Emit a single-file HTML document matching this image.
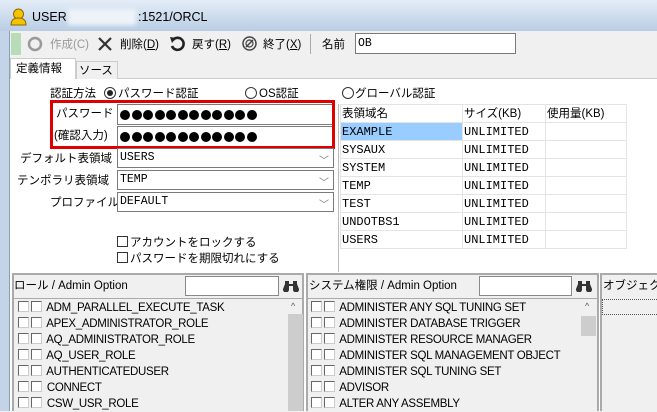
<!DOCTYPE html>
<html><head><meta charset="utf-8"><style>
*{box-sizing:border-box;margin:0;padding:0}
body{width:657px;height:411px;overflow:hidden;position:relative;background:#f0f0f0;font-family:"Liberation Sans","Noto Sans CJK JP",sans-serif;font-size:12px;color:#000}
.a{position:absolute;white-space:nowrap}
.j{font-size:11.5px;line-height:14px}
.mono{font-family:"Liberation Mono","Noto Sans CJK JP",monospace;font-size:11.5px}
.inp{position:absolute;background:#fff;border:1px solid #7a7a7a}
.cb{display:inline-block;width:11px;height:11px;border:1px solid #666;border-right-color:#ccc;border-bottom-color:#ccc;background:#fff;vertical-align:-1px;margin-right:2px}
.row{height:16px;line-height:16px;padding-left:3px;font-size:11.5px;letter-spacing:-0.3px}
.dd{position:absolute;right:4px;top:3px;color:#777;font-size:10px}
.dots i{display:inline-block;width:10px;height:10px;border-radius:50%;background:#000;margin-right:1.5px}
td{padding:0 0 0 1px;line-height:16px}
</style></head><body>
<div class="a" style="left:0;top:0;width:657px;height:31px;background:linear-gradient(#e4edf7,#b9cde4)"></div>
<div class="a" style="left:0;top:31px;width:9px;height:380px;background:#c3d4e8"></div>
<div class="a" style="left:9px;top:31px;width:1px;height:380px;background:#8aa0b8"></div>
<svg class="a" style="left:10px;top:8px" width="17" height="18"><circle cx="8.5" cy="6" r="5" fill="#f5c400" stroke="#8a6a00"/><path d="M1 17 Q1 10 8.5 10 Q16 10 16 17Z" fill="#f5c400" stroke="#8a6a00"/></svg>
<div class="a" style="left:32px;top:10px;font-size:12.5px">USER -</div>
<div class="a" style="left:68px;top:9px;width:68px;height:16px;background:#eef3f9;filter:blur(2px)"></div>
<div class="a" style="left:138px;top:10px;font-size:12.5px">:1521/ORCL</div>

<div class="a" style="left:11px;top:33px;width:10px;height:22px;background:#b8dcb8"></div>
<svg class="a" style="left:27px;top:36px" width="16" height="16"><circle cx="8" cy="8" r="6" fill="none" stroke="#999" stroke-width="2.5"/></svg>
<div class="a j" style="left:50px;top:38px;color:#999">作成(C)</div>
<svg class="a" style="left:97px;top:36px" width="16" height="16"><path d="M2 2L14 14M14 2L2 14" stroke="#333" stroke-width="2.2"/></svg>
<div class="a j" style="left:120px;top:38px">削除(<u>D</u>)</div>
<svg class="a" style="left:169px;top:35px" width="17" height="17"><path d="M4 5 A6 6 0 1 1 3 11" fill="none" stroke="#222" stroke-width="2.6"/><path d="M1 2 L7 3 L3 8Z" fill="#222"/></svg>
<div class="a j" style="left:192px;top:38px">戻す(<u>R</u>)</div>
<svg class="a" style="left:241px;top:35px" width="17" height="17"><circle cx="8.5" cy="8.5" r="6.5" fill="none" stroke="#444" stroke-width="1.5"/><circle cx="8.5" cy="8.5" r="3.5" fill="none" stroke="#444" stroke-width="1.2"/><path d="M5 12L12 5" stroke="#444" stroke-width="1.5"/></svg>
<div class="a j" style="left:263px;top:38px">終了(<u>X</u>)</div>
<div class="a" style="left:310px;top:34px;width:1px;height:20px;background:#aaa"></div>
<div class="a j" style="left:322px;top:38px">名前</div>
<div class="inp" style="left:355px;top:33px;width:161px;height:21px"></div>
<div class="a mono" style="left:358px;top:37px">OB</div>

<div class="a" style="left:10px;top:78px;width:647px;height:333px;background:#fff;border-top:1px solid #ccc"></div>
<div class="a" style="left:10px;top:58px;width:66px;height:21px;background:#fff;border:1px solid #ccc;border-bottom:none"></div>
<div class="a j" style="left:16px;top:62px">定義情報</div>
<div class="a" style="left:76px;top:61px;width:42px;height:18px;border:1px solid #ccc;border-bottom:none;background:#f0f0f0"></div>
<div class="a j" style="left:79px;top:64px">ソース</div>

<div class="a j" style="left:50px;top:87px">認証方法</div>
<svg class="a" style="left:103px;top:86px" width="14" height="14"><circle cx="7" cy="7" r="5.5" fill="#fff" stroke="#333"/><circle cx="7" cy="7" r="3" fill="#222"/></svg>
<div class="a j" style="left:118px;top:87px">パスワード認証</div>
<svg class="a" style="left:244px;top:86px" width="14" height="14"><circle cx="7" cy="7" r="5.5" fill="#fff" stroke="#333"/></svg>
<div class="a j" style="left:259px;top:87px">OS認証</div>
<svg class="a" style="left:341px;top:86px" width="14" height="14"><circle cx="7" cy="7" r="5.5" fill="#fff" stroke="#333"/></svg>
<div class="a j" style="left:355px;top:87px">グローバル認証</div>

<div class="inp" style="left:117px;top:104px;width:217px;height:21px"></div>
<div class="inp" style="left:117px;top:126px;width:217px;height:21px"></div>
<div class="a j" style="left:56px;top:107px">パスワード</div>
<div class="a j" style="left:54px;top:129px">(確認入力)</div>
<div class="a dots" style="left:120px;top:109px"><i></i><i></i><i></i><i></i><i></i><i></i><i></i><i></i><i></i><i></i><i></i><i></i></div>
<div class="a dots" style="left:120px;top:131px"><i></i><i></i><i></i><i></i><i></i><i></i><i></i><i></i><i></i><i></i><i></i><i></i></div>
<div class="a" style="left:50px;top:100px;width:285px;height:49px;border:3px solid #e00000"></div>

<div class="a j" style="left:20px;top:152px">デフォルト表領域</div>
<div class="a j" style="left:17px;top:174px">テンポラリ表領域</div>
<div class="a j" style="left:50px;top:196px">プロファイル</div>
<div class="inp" style="left:117px;top:148px;width:217px;height:20px"><span class="a mono" style="left:2px;top:2px">USERS</span><span class="dd">﹀</span></div>
<div class="inp" style="left:117px;top:170px;width:217px;height:20px"><span class="a mono" style="left:2px;top:2px">TEMP</span><span class="dd">﹀</span></div>
<div class="inp" style="left:117px;top:192px;width:217px;height:20px"><span class="a mono" style="left:2px;top:2px">DEFAULT</span><span class="dd">﹀</span></div>
<div class="a j" style="left:117px;top:236px"><span class="cb" style="border-color:#333"></span>アカウントをロックする</div>
<div class="a j" style="left:117px;top:252px"><span class="cb" style="border-color:#333"></span>パスワードを期限切れにする</div>

<div class="a" style="left:338px;top:104px;width:1px;height:168px;background:#bbb"></div>
<table class="a mono" style="left:340px;top:104px;border-collapse:collapse;font-size:12px">
<tr style="height:18px;font-family:'Liberation Sans','Noto Sans CJK JP',sans-serif;font-size:11.5px"><td style="width:122px;border:1px solid #e4e4e4">表領域名</td><td style="width:83px;border:1px solid #e4e4e4">サイズ(KB)</td><td style="width:81px;border:1px solid #e4e4e4">使用量(KB)</td></tr>
<tr style="height:18px"><td style="background:#99ccff;border:1px solid #e4e4e4">EXAMPLE</td><td style="border:1px solid #e4e4e4">UNLIMITED</td><td style="border:1px solid #e4e4e4"></td></tr>
<tr style="height:18px"><td style="border:1px solid #e4e4e4">SYSAUX</td><td style="border:1px solid #e4e4e4">UNLIMITED</td><td style="border:1px solid #e4e4e4"></td></tr>
<tr style="height:18px"><td style="border:1px solid #e4e4e4">SYSTEM</td><td style="border:1px solid #e4e4e4">UNLIMITED</td><td style="border:1px solid #e4e4e4"></td></tr>
<tr style="height:18px"><td style="border:1px solid #e4e4e4">TEMP</td><td style="border:1px solid #e4e4e4">UNLIMITED</td><td style="border:1px solid #e4e4e4"></td></tr>
<tr style="height:18px"><td style="border:1px solid #e4e4e4">TEST</td><td style="border:1px solid #e4e4e4">UNLIMITED</td><td style="border:1px solid #e4e4e4"></td></tr>
<tr style="height:18px"><td style="border:1px solid #e4e4e4">UNDOTBS1</td><td style="border:1px solid #e4e4e4">UNLIMITED</td><td style="border:1px solid #e4e4e4"></td></tr>
<tr style="height:18px"><td style="border:1px solid #e4e4e4">USERS</td><td style="border:1px solid #e4e4e4">UNLIMITED</td><td style="border:1px solid #e4e4e4"></td></tr>
</table>

<div class="a" style="left:12px;top:273px;width:292px;height:138px;background:#f0f0f0;border:2px solid #aaa;border-bottom:none"></div>
<div class="a j" style="left:14px;top:279px">ロール / Admin Option</div>
<div class="inp" style="left:185px;top:276px;width:94px;height:20px;border-color:#888"></div>
<svg class="a" style="left:283px;top:279px" width="16" height="13"><path d="M2 2h4v3h4V2h4v3l2 5a3 3 0 0 1-6 1V7H6v4a3 3 0 0 1-6-1l2-5z" fill="#333"/></svg>
<div class="a" style="left:14px;top:298px;width:288px;height:113px;background:#f0f0f0;border-top:1px solid #aaa"></div>
<div class="a" style="left:288px;top:314px;width:15px;height:97px;background:#cdcdcd"></div>
<div class="a" style="left:291px;top:301px;font-size:9px;color:#555">^</div>
<div class="a" style="left:15px;top:300px">
<div class="row"><span class="cb"></span><span class="cb"></span> ADM_PARALLEL_EXECUTE_TASK</div>
<div class="row"><span class="cb"></span><span class="cb"></span> APEX_ADMINISTRATOR_ROLE</div>
<div class="row"><span class="cb"></span><span class="cb"></span> AQ_ADMINISTRATOR_ROLE</div>
<div class="row"><span class="cb"></span><span class="cb"></span> AQ_USER_ROLE</div>
<div class="row"><span class="cb"></span><span class="cb"></span> AUTHENTICATEDUSER</div>
<div class="row"><span class="cb"></span><span class="cb"></span> CONNECT</div>
<div class="row"><span class="cb"></span><span class="cb"></span> CSW_USR_ROLE</div>
</div>

<div class="a" style="left:306px;top:273px;width:293px;height:138px;background:#f0f0f0;border:2px solid #aaa;border-bottom:none"></div>
<div class="a j" style="left:309px;top:279px">システム権限 / Admin Option</div>
<div class="inp" style="left:479px;top:276px;width:93px;height:20px;border-color:#888"></div>
<svg class="a" style="left:576px;top:279px" width="16" height="13"><path d="M2 2h4v3h4V2h4v3l2 5a3 3 0 0 1-6 1V7H6v4a3 3 0 0 1-6-1l2-5z" fill="#333"/></svg>
<div class="a" style="left:308px;top:298px;width:289px;height:113px;border-top:1px solid #aaa"></div>
<div class="a" style="left:581px;top:316px;width:15px;height:20px;background:#cdcdcd"></div>
<div class="a" style="left:585px;top:301px;font-size:9px;color:#555">^</div>
<div class="a" style="left:308px;top:300px">
<div class="row"><span class="cb"></span><span class="cb"></span> ADMINISTER ANY SQL TUNING SET</div>
<div class="row"><span class="cb"></span><span class="cb"></span> ADMINISTER DATABASE TRIGGER</div>
<div class="row"><span class="cb"></span><span class="cb"></span> ADMINISTER RESOURCE MANAGER</div>
<div class="row"><span class="cb"></span><span class="cb"></span> ADMINISTER SQL MANAGEMENT OBJECT</div>
<div class="row"><span class="cb"></span><span class="cb"></span> ADMINISTER SQL TUNING SET</div>
<div class="row"><span class="cb"></span><span class="cb"></span> ADVISOR</div>
<div class="row"><span class="cb"></span><span class="cb"></span> ALTER ANY ASSEMBLY</div>
</div>

<div class="a" style="left:600px;top:273px;width:57px;height:138px;background:#f0f0f0;border:2px solid #aaa;border-right:none;border-bottom:none"></div>
<div class="a j" style="left:603px;top:279px">オブジェクト</div>
<div class="a" style="left:602px;top:299px;width:55px;height:16px;border:1px dotted #555;border-right:none"></div>
</body></html>
